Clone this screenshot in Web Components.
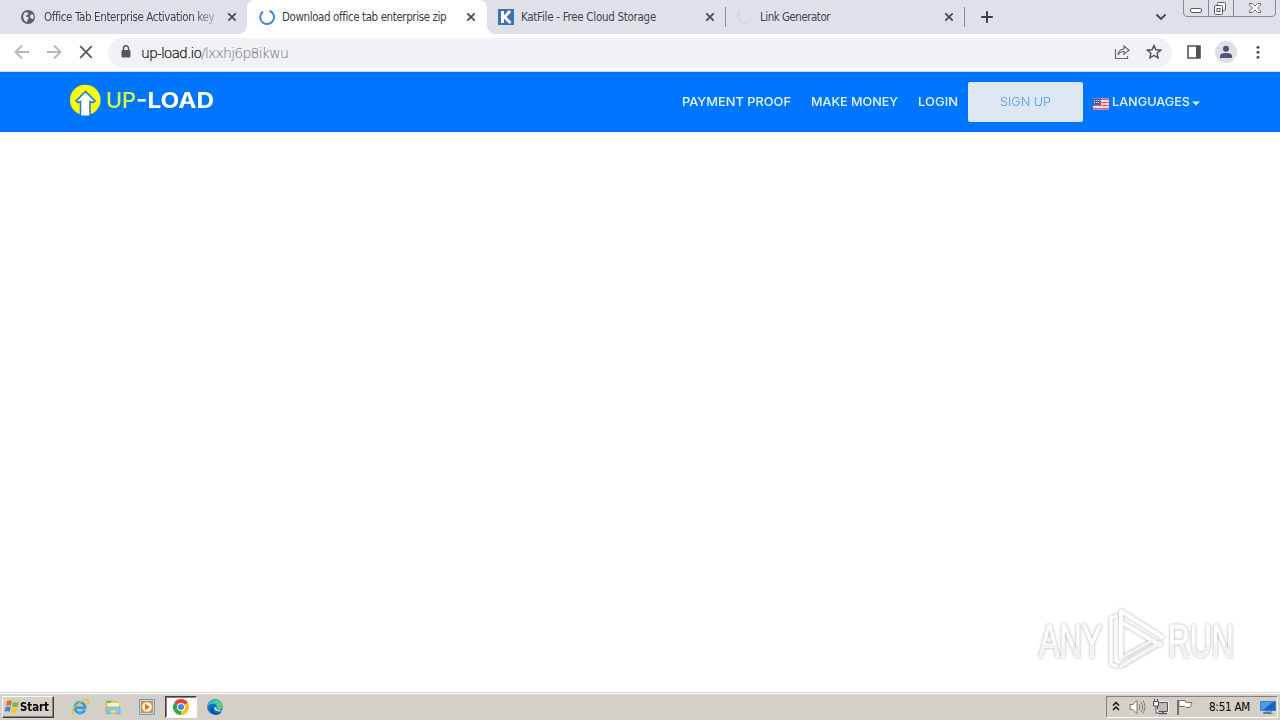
<!DOCTYPE html>
<html lang="en">
<head>
<meta charset="utf-8">
<title>Download office tab enterprise zip</title>
<style>
html,body{margin:0;height:100%;overflow:hidden;background:#fff}
body{font-family:"DejaVu Sans Condensed","DejaVu Sans",sans-serif}
</style>
</head>
<body>
<desk-screen></desk-screen>
<script>
const define = (name, html, setup) => customElements.define(name, class extends HTMLElement {
  connectedCallback() {
    if (this.shadowRoot) return;
    const t = document.createElement('template');
    t.innerHTML = html;
    this.attachShadow({mode: 'open'}).append(t.content.cloneNode(true));
    if (setup) setup(this, this.shadowRoot);
  }
});

// A one-line label that fills the width given in "w", by letter spacing,
// or by widening the glyphs when "stretch" is set.
define('fit-label', `<style>:host{display:block;white-space:pre;flex:none}span{display:inline-block;transform-origin:0 50%}</style><span><slot></slot></span>`, (el, root) => {
  const w = +el.getAttribute('w'), s = root.querySelector('span');
  const natural = s.getBoundingClientRect().width;
  if (el.hasAttribute('stretch')) s.style.transform = `scaleX(${w / natural})`;
  else s.style.letterSpacing = ((w - natural) / el.textContent.length) + 'px';
  el.style.width = w + 'px';
});

define('browser-tab', `<style>
:host{display:flex;align-items:center;box-sizing:border-box;width:239px;height:34px;padding:0 10px 0 13px;color:#41454c;font-size:11.5px;flex:none}
:host([active]){background:#fff;border-radius:8px 8px 0 0;width:240px;position:relative;color:#3c4043}
:host([active])::before,:host([active])::after{content:"";position:absolute;bottom:0;width:8px;height:8px}
:host([active])::before{left:-8px;background:radial-gradient(circle at 0 0,transparent 7.5px,#fff 8px)}
:host([active])::after{right:-8px;background:radial-gradient(circle at 100% 0,transparent 7.5px,#fff 8px)}
.ic{width:16px;height:16px;display:flex;margin-right:7px}
.t{flex:1}.x{width:12px;height:12px;flex:none}
</style><div class="ic"><slot name="icon"></slot></div><div class="t"><slot></slot></div>
<svg class="x" viewBox="0 0 12 12"><path d="M2.300 2.300l7.400 7.400M9.700 2.300L2.300 9.700" stroke="#484c52" stroke-width="1.800"/></svg>`);

define('window-buttons', `<style>:host{display:block;width:93px;height:17px}svg{display:block}</style>
<svg width="93" height="17" viewBox="0 0 93 17" fill="none"><path d="M.5 0v13q0 3.500 3.500 3.500h85q3.500 0 3.500-3.500V0M25.500 0v16M50.500 0v16" stroke="#868a94"/>
<rect x="7.500" y="8.500" width="11" height="4" rx="1.500" fill="#fff" stroke="#555a64"/>
<rect x="34.500" y="2.500" width="8" height="8" rx="1" fill="#fff" stroke="#555a64"/><rect x="31.500" y="5.500" width="8" height="9" rx="1" fill="#fff" stroke="#555a64"/><rect x="34" y="8.500" width="3" height="3" stroke="#555a64"/>
<path d="M66.500 3.500h3l2.500 2.500 2.500-2.500h3v1.500l-3 3 3 3v1.500h-3L72 10l-2.500 2.500h-3V11l3-3-3-3z" fill="#fff" stroke="#62666f"/></svg>`);

define('tab-strip', `<style>
:host{display:flex;height:34px;background:#dee1e8;padding-left:8px;position:relative}
.sep{width:1px;height:20px;margin-top:7px;background:#8b8f97;flex:none}
.plus{width:14px;height:14px;margin:10px 0 0 15px}.chev{width:12px;height:8px;margin:13px 16px 0 auto}
window-buttons{margin-right:4px}
svg{display:block}
</style>
<browser-tab style="padding-right:9px"><svg slot="icon" width="16" height="16" viewBox="0 0 16 16"><circle cx="7" cy="8" r="7" fill="#5a5e64"/><path d="M2.200 8.200Q1.800 5 4.500 3.200l2.200.3.800 1.400-1.500 1.300-1.300.4.800 1.200 1.700.4.700 1.300-1.500 1.200-.4 2.500Q2.800 12 2.200 8.200zM9 6.800l1.500-1.500 1.600.3q1.100 2.600.2 4.600l-1.500-.4-1.600-1.300z" fill="#e1e4e9"/></svg><fit-label w="170" style="-webkit-mask:linear-gradient(90deg,#000 88%,#0005)">Office Tab Enterprise Activation key</fit-label></browser-tab>
<browser-tab active style="padding-left:12px"><svg slot="icon" width="16" height="16" viewBox="0 0 16 16"><path d="M10.500 1.700A6.900 6.900 0 1 1 4 2.600" stroke="#4285dc" stroke-width="2" fill="none"/></svg><fit-label w="164">Download office tab enterprise zip</fit-label></browser-tab>
<browser-tab style="padding-left:11px"><svg slot="icon" width="16" height="16" viewBox="0 0 16 16"><path fill="#3f70b4" d="M0 0h16v16H0z"/><path d="M4.500 2v12M12 2L6.500 8l6 6" stroke="#fff" stroke-width="3" fill="none"/></svg><fit-label w="135">KatFile - Free Cloud Storage</fit-label></browser-tab>
<div class="sep" style="margin-left:-1px"></div>
<browser-tab style="padding-left:11px"><svg slot="icon" width="16" height="16" viewBox="0 0 16 16"><path d="M3 2.500A7 7 0 1 0 14.500 10" stroke="#c9dbee" stroke-width="2" fill="none"/></svg><fit-label w="70">Link Generator</fit-label></browser-tab>
<div class="sep" style="margin-left:-1px"></div>
<svg class="plus" viewBox="0 0 14 14"><path d="M7 1.200v11.600M1.200 7h11.600" stroke="#3c4047" stroke-width="2"/></svg>
<svg class="chev" viewBox="0 0 12 8"><path d="M1.500 1.500L6 6l4.500-4.500" stroke="#44484e" stroke-width="1.900" fill="none"/></svg>
<window-buttons></window-buttons>`);

define('nav-bar', `<style>
:host{display:flex;box-sizing:border-box;height:38px;background:#fff;align-items:center;padding:0 11px 1px 12px;border-bottom:1px solid #c9daf8}
svg{display:block;flex:none}
.box{display:flex;align-items:center;box-sizing:border-box;width:1064px;height:29px;border-radius:15px;background:#f0f2f5;padding:0 10px;margin-left:12px}
.url{display:flex;font-size:14px;color:#6b6f76;font-family:"DejaVu Sans Light","DejaVu Sans ExtraLight","DejaVu Sans",sans-serif;font-weight:200;margin-left:8px;padding-top:1px}
.host{color:#000;-webkit-text-stroke:.25px #202124}
</style>
<svg width="20" height="20" viewBox="0 0 20 20"><path d="M17 10H4M10 3.500L3.500 10l6.500 6.500" stroke="#b5b7ba" stroke-width="1.800" fill="none"/></svg>
<svg width="20" height="20" viewBox="0 0 20 20" style="margin-left:12px"><path d="M3 10h13M10 3.500l6.500 6.500-6.500 6.500" stroke="#b5b7ba" stroke-width="1.800" fill="none"/></svg>
<svg width="20" height="20" viewBox="0 0 20 20" style="margin-left:12px"><path d="M4.200 4.200l11.600 11.600M15.800 4.200L4.200 15.800" stroke="#55585d" stroke-width="1.800"/></svg>
<div class="box">
<svg width="15" height="16" viewBox="0 0 15 16"><rect x="3.500" y="6" width="9" height="7.500" rx="1" fill="#55595f"/><path d="M5.500 6.500V4.300a2.500 2.500 0 0 1 5 0v2.200" stroke="#55595f" stroke-width="1.500" fill="none"/></svg>
<div class="url"><fit-label class="host" w="60">up-load.io</fit-label><fit-label w="87">/lxxhj6p8ikwu</fit-label></div>
<svg width="17" height="16" viewBox="0 0 17 16" style="margin-left:auto"><path d="M1.500 5v9.500h12V12" stroke="#65696f" stroke-width="1.200" fill="none"/><path d="M4 11q.5-5.500 6-6V2l5 4.300-5 4V7.500Q6 7.500 4 11z" stroke="#65696f" stroke-width="1.200" fill="none"/></svg>
<svg width="16" height="16" viewBox="0 0 16 16" style="margin-left:15px"><path d="M8 1.500l1.900 4.300 4.700.4-3.500 3.100 1 4.600L8 11.500l-4.100 2.400 1-4.600-3.500-3.100 4.700-.4z" stroke="#4c5055" stroke-width="1.400" fill="none"/></svg>
</div>
<svg width="14" height="14" viewBox="0 0 14 14" style="margin-left:15px"><path d="M1 1h12v12H1z" fill="none" stroke="#4e5157" stroke-width="1.600"/><path d="M9 1h4v12H9z" fill="#4e5157"/></svg>
<svg width="22" height="22" viewBox="0 0 22 22" style="margin-left:14px"><circle cx="11" cy="11" r="11" fill="#dde0e6"/><circle cx="11" cy="7.700" r="3" fill="#4a5773"/><path d="M5 17v-2q0-3 6-3t6 3v2z" fill="#4a5773"/></svg>
<svg width="4" height="16" viewBox="0 0 4 16" style="margin-left:19px"><g fill="#50545a"><circle cx="2" cy="3.300" r="1.500"/><circle cx="2" cy="8.300" r="1.500"/><circle cx="2" cy="13.300" r="1.500"/></g></svg>`);

define('site-header', `<style>
:host{display:flex;box-sizing:border-box;height:60px;background:#0075ff;color:#e4f8ff;align-items:center;padding:0 80px 0 69px;font-family:Inter,"Liberation Sans",sans-serif;font-size:12px;font-weight:500}
svg{display:block;flex:none}
.brand{display:flex;align-items:center;font-size:21.500px;font-weight:700;padding-bottom:4px;color:#fff}
.brand svg{margin-right:5px}
.up{color:#d9ff3c;font-weight:500}
nav{display:flex;align-items:center;margin-left:auto;height:40px}
nav>fit-label{padding-bottom:1px}
.su{display:flex;box-sizing:border-box;width:115px;height:40px;align-items:center;justify-content:center;background:#dce7f3;border-radius:2px;color:#5b98e2;font-weight:300;margin:0 10px;padding-bottom:1px}
</style>
<div class="brand"><svg width="32" height="32" viewBox="0 0 32 32"><circle cx="16.300" cy="16" r="15.300" fill="#fcff00"/><path d="M16.500 7.500L7 17l2 1.500 2.500-1V30q5 2 9.500 0V17.500l3 1 2-1.500z" fill="#fff" stroke="#277ad3" stroke-width="1.600"/><path d="M12.300 28h8v3.200q-4 .8-8 0z" fill="#fff"/></svg><fit-label class="up" w="30" stretch>UP</fit-label><fit-label w="78" stretch>-LOAD</fit-label></div>
<nav><fit-label w="109" stretch>PAYMENT PROOF</fit-label><fit-label w="87" style="margin-left:20px" stretch>MAKE MONEY</fit-label><fit-label w="40" style="margin-left:20px" stretch>LOGIN</fit-label>
<div class="su"><fit-label w="51" stretch>SIGN UP</fit-label></div>
<svg width="16" height="12" viewBox="0 0 16 12" style="margin-top:3px"><path d="M0 .5h16v11H0z" fill="#fff"/><path d="M0 1.500h16M0 4.500h16M0 7.500h16M0 10.500h16" stroke="#ec5960" stroke-width="1.700"/><path d="M0 .5h8v6.500H0z" fill="#4060b4"/><path d="M1 2.500h6.500M1 4.500h6.500" stroke="#dfe7fa" stroke-dasharray="1 1"/></svg>
<fit-label w="78" style="margin-left:3px" stretch>LANGUAGES</fit-label>
<svg width="8" height="5" viewBox="0 0 8 5" style="margin:2px 0 0 2px"><path d="M0 .5h8l-4 4z" fill="#d8f5ff"/></svg></nav>`);

// Translucent brand mark laid over the page content.
define('run-mark', `<style>:host{display:block;position:absolute;right:40px;bottom:16px}svg{display:block;filter:drop-shadow(0 0 1.500px #aaa)}text{font:38px "Liberation Sans",sans-serif;fill:url(#fade);stroke:#fff;stroke-width:.8}</style>
<svg width="204" height="72" viewBox="0 0 204 72"><defs><linearGradient id="fade" x1="0" y1="0" x2="0" y2="1"><stop offset=".55" stop-color="#fff"/><stop offset=".6" stop-color="#f0f0f0"/></linearGradient></defs><g transform="translate(3 2)"><text transform="translate(0 51) scale(.79 1.220)" textLength="80" lengthAdjust="spacingAndGlyphs">ANY</text><text transform="translate(129 51) scale(.79 1.220)" textLength="83" lengthAdjust="spacingAndGlyphs">RUN</text></g>
<g fill="none" stroke="#fff" stroke-width="4" stroke-linejoin="round" stroke-linecap="round"><path d="M85 54V7l41 26M85 18l39 23"/><path d="M85 55l39-23" stroke="#f4f4f4" transform="translate(0 7)"/><path d="M85 54l32-18" stroke="#f4f4f4" stroke-width="3"/><path d="M80 12l-5 2v46l5 2" stroke-width="3.500"/></g></svg>`);

define('system-tray', `<style>:host{display:flex;align-items:center;box-sizing:border-box;width:172px;height:22px;border:1px solid;border-color:#85827b #fff #fff #85827b;padding-left:5px;font-size:11.500px;color:#000}svg{display:block;flex:none}</style>
<svg width="8" height="12" viewBox="0 0 8 12"><path d="M1 4.500l3-3 3 3M1 9l3-3 3 3" stroke="#111" stroke-width="1.500" fill="none"/></svg>
<svg width="18" height="18" viewBox="0 0 18 18" style="margin-left:8px"><path d="M2 6.500h3l4-4v13l-4-4H2z" fill="#fff" stroke="#77756f"/><path d="M11 6q2 3 0 6M13 4q3.500 5 0 10M15 2.500q4 6 0 13" fill="none" stroke="#807e78"/></svg>
<svg width="18" height="18" viewBox="0 0 18 18" style="margin-left:6px"><path d="M5.500 4.500h10v9h-10z" fill="#c0c0bc" stroke="#fff" stroke-width="2.500"/><path d="M5.500 4.500h10v9h-10z" fill="#bdbdb9" stroke="#55534f"/><path d="M7 15.500h8M11 13v3" stroke="#55534f" stroke-width="1.500"/><path d="M1.500 3.500h5V8h-5zM2.500 1v3M5.500 1v3M4 8v7h3" fill="#fff" stroke="#55534f"/></svg>
<svg width="18" height="18" viewBox="0 0 18 18" style="margin-left:6px"><path d="M2 2v15" stroke="#77756f" stroke-width="2"/><path d="M3 2.500h6l1 2h6l-2 5h-4l-1-1H3z" fill="#fff" stroke="#77756f"/></svg>
<fit-label w="41" style="margin-left:15px">8:51 AM</fit-label>
<svg width="16" height="16" viewBox="0 0 16 16" style="margin-left:10px"><path d="M.5 2.500h15v9H.5z" fill="#1763c9" stroke="#4780bd"/><path d="M1 3h12L3 11H1z" fill="#4f9ae4"/><path d="M5 12h6v1.500H3.500v1h9" fill="none" stroke="#547baa"/></svg>`);

define('task-bar', `<style>
:host{display:flex;box-sizing:border-box;height:28px;background:#d4d0c8;border-top:1px solid #dedbd5;box-shadow:inset 0 1px #fff;padding:3px 2px 2px;align-items:center}
svg{display:block;flex:none}
.start{display:flex;align-items:center;box-sizing:border-box;width:52px;height:22px;border:1px solid;border-color:#fff #404040 #404040 #fff;box-shadow:inset -1px -1px #85827b;padding-left:1px;font-size:12px;font-weight:700;color:#000}
.apps{display:flex;align-items:center;margin-left:11px}
.app{width:32px;height:22px;margin-right:2px;display:flex;align-items:center;justify-content:center;box-sizing:border-box}
.on{background:#fff;border:1px solid;border-color:#404040 #fff #fff #404040;box-shadow:inset 1px 1px #85827b}
system-tray{margin-left:auto}
</style>
<div class="start"><svg width="16" height="16" viewBox="0 0 16 16"><path d="M3 2q3-1.500 5 .2L6.800 7Q5 5.600 2 6.800z" fill="#ed6b2d"/><path d="M9 3q2.500 1 6 0l-1.300 4.800q-3 1-5.700-.3z" fill="#80b93d"/><path d="M1.700 8q3-1.200 5 0l-1.200 5q-2-1.600-5-.5z" fill="#3b86d8"/><path d="M7.700 8.600q2.500 1.300 5.800.3L12 14q-3 .8-5.500-.5z" fill="#f9c72d"/></svg><fit-label w="29" stretch>Start</fit-label></div>
<div class="apps">
<div class="app" style="width:30px"><svg width="18" height="18" viewBox="0 0 18 18"><path d="M4.500 9.800H14Q13.500 4.500 9 4.500T4 10q.3 4.700 5 5 3.300 0 4.700-3" stroke="#36a0df" stroke-width="2.900" fill="none"/><path d="M2 16Q-1 13 7 6t10-3q.8 1-.8 3.500" stroke="#e9b936" stroke-width="1.400" fill="none"/></svg></div>
<div class="app"><svg width="18" height="18" viewBox="0 0 18 18"><path d="M2 3h5l1 1h6v11H2z" fill="#f5dc83" stroke="#d0ac51"/><path d="M4 5h11v8H4z" fill="#fff2b4"/><path d="M3 3h4v2H3z" fill="#5cbd76"/><path d="M3 9h13v7h-3v-4H6v4H3z" fill="#8ccaea" stroke="#5b9ec5" stroke-width=".6"/></svg></div>
<div class="app"><svg width="18" height="18" viewBox="0 0 18 18"><path d="M1.500 1.500h15v15h-15z" fill="#b9dcf2" stroke="#58a2d6"/><path d="M3 3h12v12H3z" fill="#f08b20"/><circle cx="9" cy="9" r="4.800" fill="#fff"/><path d="M7 5.500v7l5-3.500z" fill="#e86f12"/></svg></div>
<div class="app on"><svg width="16" height="16" viewBox="0 0 16 16"><path d="M8 8L1.070 4A8 8 0 0 1 14.930 4z" fill="#e74335"/><path d="M8 8l6.930-4A8 8 0 0 1 8 16z" fill="#fbc116"/><path d="M8 8v8A8 8 0 0 1 1.070 4z" fill="#32a350"/><circle cx="8" cy="8" r="4" fill="#fff"/><circle cx="8" cy="8" r="3" fill="#4285f4"/></svg></div>
<div class="app"><svg width="16" height="16" viewBox="0 0 16 16"><circle cx="8" cy="8" r="7.800" fill="#176fc2"/><path d="M.6 7A7.700 7.700 0 0 1 15.800 7.500Q15.500 11 11 10.800 8.800 10.300 10 8.500 10 5 6.300 4.800 2.500 4.800.6 7z" fill="#39c5bc"/><path d="M9 2q7 1 6.500 6-1 3-4.500 2.500 0-6-2-8.500z" fill="#5dce77"/><path d="M6 8q-1 5 4 6 3 .5 4.500-1.500Q13 16 8.500 15.800 3 14 3.500 9.500z" fill="#0d4e97"/><path d="M9.500 8.500Q8 11.500 14.800 11.500l-2 1Q7 12 7 8.500z" fill="#d8e8ef"/></svg></div>
</div><system-tray></system-tray>`);

define('desk-screen', `<style>:host{display:flex;flex-direction:column;width:1280px;height:720px;overflow:hidden}tab-strip,nav-bar,site-header,task-bar{flex:none}main{flex:1;background:#fff;position:relative}</style>
<tab-strip></tab-strip><nav-bar></nav-bar><site-header></site-header><main><run-mark></run-mark></main><task-bar></task-bar>`);
</script>
</body>
</html>
